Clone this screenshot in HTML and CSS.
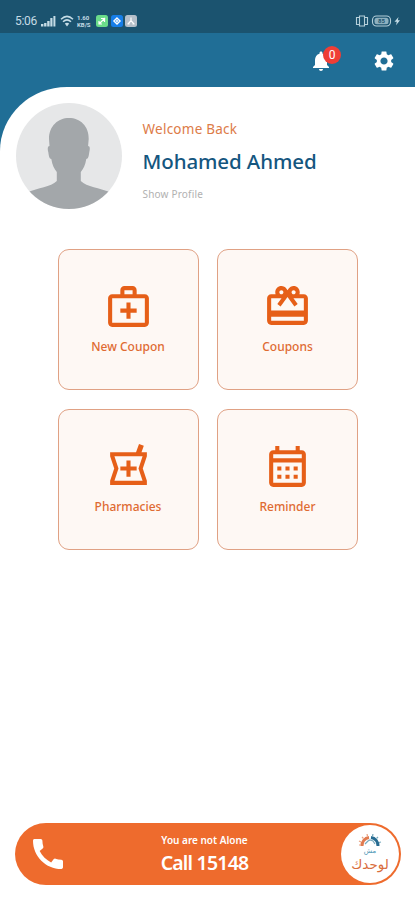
FILE: index.html
```html
<!DOCTYPE html>
<html lang="en">
<head>
<meta charset="utf-8">
<title>Home</title>
<link rel="stylesheet" href="styles.css">
</head>
<body>
<div class="app">
  <div class="status">
    <span class="time">5:06</span>
    <svg class="signal" width="15" height="12" viewBox="0 0 15 12"><path d="M0 9h2.4v2.500H0zM3.1 8h2.4v3.500H3.1zM6.2 6h2.4v5.500H6.2zM9.3 3h2.2v8.500H9.3zM12.4 1h2v10.500h-2z"/></svg>
    <svg class="wifi" width="14" height="12" viewBox="0 0 14 12"><path class="arc" d="M1 4.2Q7-1.5 13 4.2M3 6.7Q7 3 11 6.7"/><path d="M4.8 8.6Q7 6.8 9.2 8.6L7 11.5z"/></svg>
    <span class="speed"><span>1.60</span><span>KB/S</span></span>
    <svg class="chip" width="12" height="12" viewBox="0 0 12 12"><rect class="green" width="12" height="12" rx="2.5"/><path class="mark" d="M3 9l6-6M5 3.5h3.5V7M3 6v3h3"/></svg>
    <svg class="chip" width="12" height="12" viewBox="0 0 12 12"><rect class="blue" width="12" height="12" rx="2.5"/><path class="mark" d="M6 2.800L9.200 6 6 9.200 2.800 6zM6 4.500v3M4.500 6h3"/></svg>
    <svg class="chip" width="12" height="12" viewBox="0 0 12 12"><rect class="gray" width="12" height="12" rx="2.5"/><path class="mark" d="M6 2.5v3.2L3 9M6 5.7L9 9M2.5 8.8h2M7.5 8.8h2"/></svg>
    <svg class="battery" width="46" height="12" viewBox="0 0 46 12"><path class="line" d="M4.500 1h5v10h-5zM4.500 2.500h-3v7h3M9.500 2.500h3v7h-3"/><rect class="line" x="17.5" y="1" width="18" height="10" rx="4"/><rect class="level" x="19.5" y="2.8" width="14" height="6.4" rx="2.5"/><text x="26.5" y="8.3" text-anchor="middle">85</text><path d="M43.5 2L39.5 6.7h2.3L41 10.3l4-5h-2.2z"/></svg>
  </div>
  <header class="toolbar">
    <div class="bell">
      <svg width="24" height="24" viewBox="0 0 24 24"><path d="M12 22c1.1 0 2-.9 2-2h-4c0 1.1.89 2 2 2zm6-6v-5c0-3.07-1.64-5.64-4.5-6.32V4c0-.83-.67-1.5-1.5-1.5s-1.5.67-1.5 1.5v.68C7.63 5.36 6 7.92 6 11v5l-2 2v1h16v-1l-2-2z"/></svg>
      <span class="badge">0</span>
    </div>
    <svg width="24" height="24" viewBox="0 0 24 24"><path d="M19.14 12.94c.04-.3.06-.61.06-.94 0-.32-.02-.64-.07-.94l2.03-1.58c.18-.14.23-.41.12-.61l-1.92-3.32c-.12-.22-.37-.29-.59-.22l-2.39.96c-.5-.38-1.03-.7-1.62-.94l-.36-2.54c-.04-.24-.24-.41-.48-.41h-3.84c-.24 0-.43.17-.47.41l-.36 2.54c-.59.24-1.13.57-1.62.94l-2.39-.96c-.22-.08-.47 0-.59.22L2.74 8.87c-.12.21-.08.47.12.61l2.03 1.58c-.05.3-.09.63-.09.94s.02.64.07.94l-2.03 1.58c-.18.14-.23.41-.12.61l1.92 3.32c.12.22.37.29.59.22l2.39-.96c.5.38 1.03.7 1.62.94l.36 2.54c.05.24.24.41.48.41h3.84c.24 0 .44-.17.47-.41l.36-2.54c.59-.24 1.13-.56 1.62-.94l2.39.96c.22.08.47 0 .59-.22l1.92-3.32c.12-.22.07-.47-.12-.61l-2.01-1.58zM12 15.6c-1.98 0-3.6-1.62-3.6-3.6s1.62-3.6 3.6-3.6 3.6 1.62 3.6 3.6-1.62 3.6-3.6 3.6z"/></svg>
  </header>
  <main class="sheet">
    <section class="profile">
      <svg class="avatar" width="106" height="106" viewBox="0 0 106 106"><path d="M53 15C42 15 33 23 33 36l.5 7c-2 0-2 3-1.200 6 .5 4 1 7 3 7 1 6 3 10 5.500 13v9c-6 6-19 7-29 11v17h82V89c-10-4-23-5-29-11v-9c2.500-3 4.500-7 5.500-13 2 0 2.500-3 3-7 .8-3 .8-6-1.200-6l.6-7C73 23 64 15 53 15z"/></svg>
      <div class="who">
        <div class="welcome">Welcome Back</div>
        <div class="name">Mohamed Ahmed</div>
        <div class="show">Show Profile</div>
      </div>
    </section>
    <section class="grid">
      <div class="card">
        <svg width="49" height="49" viewBox="0 0 24 24"><path d="M20 6h-4V4c0-1.100-.9-2-2-2h-4c-1.100 0-2 .9-2 2v2H4c-1.100 0-2 .9-2 2v12c0 1.100.9 2 2 2h16c1.100 0 2-.9 2-2V8c0-1.100-.9-2-2-2zM10 4h4v2h-4V4zm10 16H4V8h16v12zM11 10h2v3h3v2h-3v3h-2v-3H8v-2h3z"/></svg>
        <span>New Coupon</span>
      </div>
      <div class="card">
        <svg width="49" height="49" viewBox="0 0 24 24"><path d="M20 6h-2.180c.11-.31.18-.65.18-1 0-1.660-1.340-3-3-3-1.050 0-1.960.54-2.500 1.350l-.5.670-.5-.680C10.960 2.540 10.050 2 9 2 7.340 2 6 3.340 6 5c0 .35.070.69.180 1H4c-1.110 0-1.990.89-1.990 2L2 19c0 1.110.89 2 2 2h16c1.110 0 2-.89 2-2V8c0-1.110-.89-2-2-2zm-5-2c.55 0 1 .45 1 1s-.45 1-1 1-1-.45-1-1 .45-1 1-1zM9 4c.55 0 1 .45 1 1s-.45 1-1 1-1-.45-1-1 .45-1 1-1zm11 15H4v-2h16v2zm0-5H4V8h5.080L7 10.830 8.620 12 12 7.400l3.380 4.600L17 10.830 14.920 8H20v6z"/></svg>
        <span>Coupons</span>
      </div>
      <div class="card">
        <svg width="49" height="49" viewBox="0 0 24 24"><path d="M21 5h-2.640l1.140-3.140L17.150 1l-1.460 4H3v2l2 6-2 6v2h18v-2l-2-6 2-6V5zm-3.900 8.630L18.890 19H5.110l1.790-5.370.21-.63-.21-.63L5.110 7h13.780l-1.790 5.370-.21.63.21.63zM11 9h2v3h3v2h-3v3h-2v-3H8v-2h3z"/></svg>
        <span>Pharmacies</span>
      </div>
      <div class="card">
        <svg width="49" height="49" viewBox="0 0 24 24"><path d="M19 4h-1V2h-2v2H8V2H6v2H5c-1.110 0-1.990.9-1.990 2L3 20c0 1.100.89 2 2 2h14c1.100 0 2-.9 2-2V6c0-1.100-.9-2-2-2zm0 16H5V10h14v10zm0-12H5V6h14v2zM7 12h2v2H7zM11 12h2v2h-2zM15 12h2v2h-2zM7 16h2v2H7zM11 16h2v2h-2zM15 16h2v2h-2z"/></svg>
        <span>Reminder</span>
      </div>
    </section>
    <section class="call">
      <svg class="phone" width="40" height="40" viewBox="0 0 24 24"><path d="M20.010 15.380c-1.230 0-2.420-.2-3.530-.56-.35-.12-.74-.03-1.010.24l-1.570 1.970c-2.830-1.350-5.480-3.900-6.890-6.830l1.950-1.660c.27-.28.35-.67.24-1.020-.37-1.110-.56-2.300-.56-3.530 0-.54-.45-.99-.99-.99H4.190C3.650 3 3 3.240 3 3.990 3 13.280 10.730 21 20.010 21c.71 0 .99-.63.99-1.180v-3.450c0-.54-.45-.99-.99-.99z"/></svg>
      <div class="calltext">
        <span class="alone">You are not Alone</span>
        <span class="number">Call 15148</span>
      </div>
      <div class="logo">
        <svg width="24" height="13" viewBox="0 0 24 13"><path class="warm" d="M4 12a8 8 0 0 1 7-8.500"/><path class="cool" d="M13 3.500a8 8 0 0 1 7 8.500"/><path class="warm-ray" d="M1 7l2 1M4 3l1.500 1.500M9 0l.5 2M1 11h2"/><path class="cool-ray" d="M15 0l-.5 2M20 3l-1.500 1.500M23 8l-2 .5M7 10l3-3 2-1 3 1 2 3"/></svg>
        <span class="top">مش</span>
        <span class="main">لوحدك</span>
      </div>
    </section>
  </main>
</div>
</body>
</html>
```
FILE: styles.css
```css
* { box-sizing: border-box; }
body {
  margin: 0;
  font-family: "Noto Sans", sans-serif;
}
svg { display: block; flex: none; }
.app {
  display: flex;
  flex-direction: column;
  height: 900px;
  background: #206e96;
  overflow: hidden;
}
.status {
  display: flex;
  align-items: center;
  height: 33px;
  flex: none;
  padding: 8px 14px 0 15px;
  background: #1b536f;
  color: #c5dce6;
  fill: #c5dce6;
}
.time {
  width: 26px;
  font: 12px/14px Roboto, sans-serif;
  letter-spacing: -0.3px;
}
.wifi { margin-left: 4px; }
.arc { fill: none; stroke: #c5dce6; stroke-width: 1.5; }
.speed {
  display: flex;
  flex-direction: column;
  width: 16px;
  margin: 0 3px;
  font: bold 6px/7px Roboto, sans-serif;
}
.chip { margin-right: 2.5px; }
.green { fill: #6bdc8a; }
.blue { fill: #167ee8; }
.gray { fill: #b5bfc9; }
.mark { fill: none; stroke: #fff; stroke-width: 1.2; }
.battery { margin-left: auto; }
.line { fill: none; stroke: #b5cfda; stroke-width: 1.1; }
.level { fill: #8db0bf; }
.battery text { font: bold 6px Roboto, sans-serif; fill: #1b536f; }
.toolbar {
  display: flex;
  justify-content: flex-end;
  align-items: center;
  gap: 39px;
  height: 54px;
  flex: none;
  padding: 1px 19px 0 0;
  fill: #fff;
}
.bell { position: relative; }
.badge {
  position: absolute;
  left: 14px;
  top: -3px;
  width: 18px;
  height: 18px;
  border-radius: 50%;
  background: #ef3e36;
  color: #fff;
  font: 12px/18px Roboto, sans-serif;
  text-align: center;
}
.sheet {
  flex: 1;
  display: flex;
  flex-direction: column;
  padding: 16px 14px 15px 15px;
  background: #fff;
  border-top-left-radius: 67px 64px;
}
.profile { display: flex; gap: 20.5px; padding-left: 1px; }
.avatar { border-radius: 50%; background: #e6e7e8; fill: #a3a7aa; }
.who { padding-top: 16px; white-space: nowrap; }
.welcome {
  font-size: 13.5px;
  line-height: 20px;
  letter-spacing: 0.25px;
  color: #dd7b48;
}
.name {
  margin-top: 8px;
  font-size: 20.5px;
  line-height: 28px;
  font-weight: 500;
  letter-spacing: -0.1px;
  color: #14567f;
}
.show {
  margin-top: 11px;
  font-size: 10px;
  line-height: 16px;
  letter-spacing: 0.2px;
  color: #b1b1b1;
}
.grid {
  display: grid;
  grid-template-columns: 141px 141px;
  gap: 18.5px;
  margin: 40px 0 0 42.5px;
}
.card {
  display: flex;
  flex-direction: column;
  align-items: center;
  height: 141px;
  padding-top: 32px;
  border: 1px solid #e0a184;
  border-radius: 11px;
  background: #fef8f4;
  fill: #e65f18;
  color: #df6b32;
  font-size: 12px;
  line-height: 18px;
  font-weight: 500;
}
.card span { margin-top: 7px; }
.call {
  display: flex;
  align-items: center;
  height: 62px;
  margin-top: auto;
  padding: 0 2px 0 13px;
  border-radius: 31px;
  background: #ee6b2d;
  color: #fff;
}
.phone { fill: #fff; }
.calltext {
  flex: 1;
  display: flex;
  flex-direction: column;
  align-items: center;
  white-space: nowrap;
}
.alone { font-size: 10px; line-height: 16px; font-weight: 600; }
.number {
  margin-top: 1px;
  font-size: 19.5px;
  line-height: 28px;
  font-weight: 600;
  letter-spacing: -0.8px;
}
.logo {
  display: flex;
  flex-direction: column;
  align-items: center;
  width: 58px;
  height: 58px;
  padding-top: 9px;
  border-radius: 50%;
  background: #fff;
}
.warm, .cool { fill: none; stroke: #e07b50; stroke-width: 3; }
.cool { stroke: #276b91; }
.warm-ray, .cool-ray { fill: none; stroke: #e9a07f; stroke-width: 1.2; }
.cool-ray { stroke: #76a9bd; }
.top {
  font: 7px/9px "DejaVu Sans", sans-serif;
  color: #4c96b4;
}
.main {
  font: 13.5px/16px "DejaVu Sans", sans-serif;
  color: #d96d3d;
}
```
